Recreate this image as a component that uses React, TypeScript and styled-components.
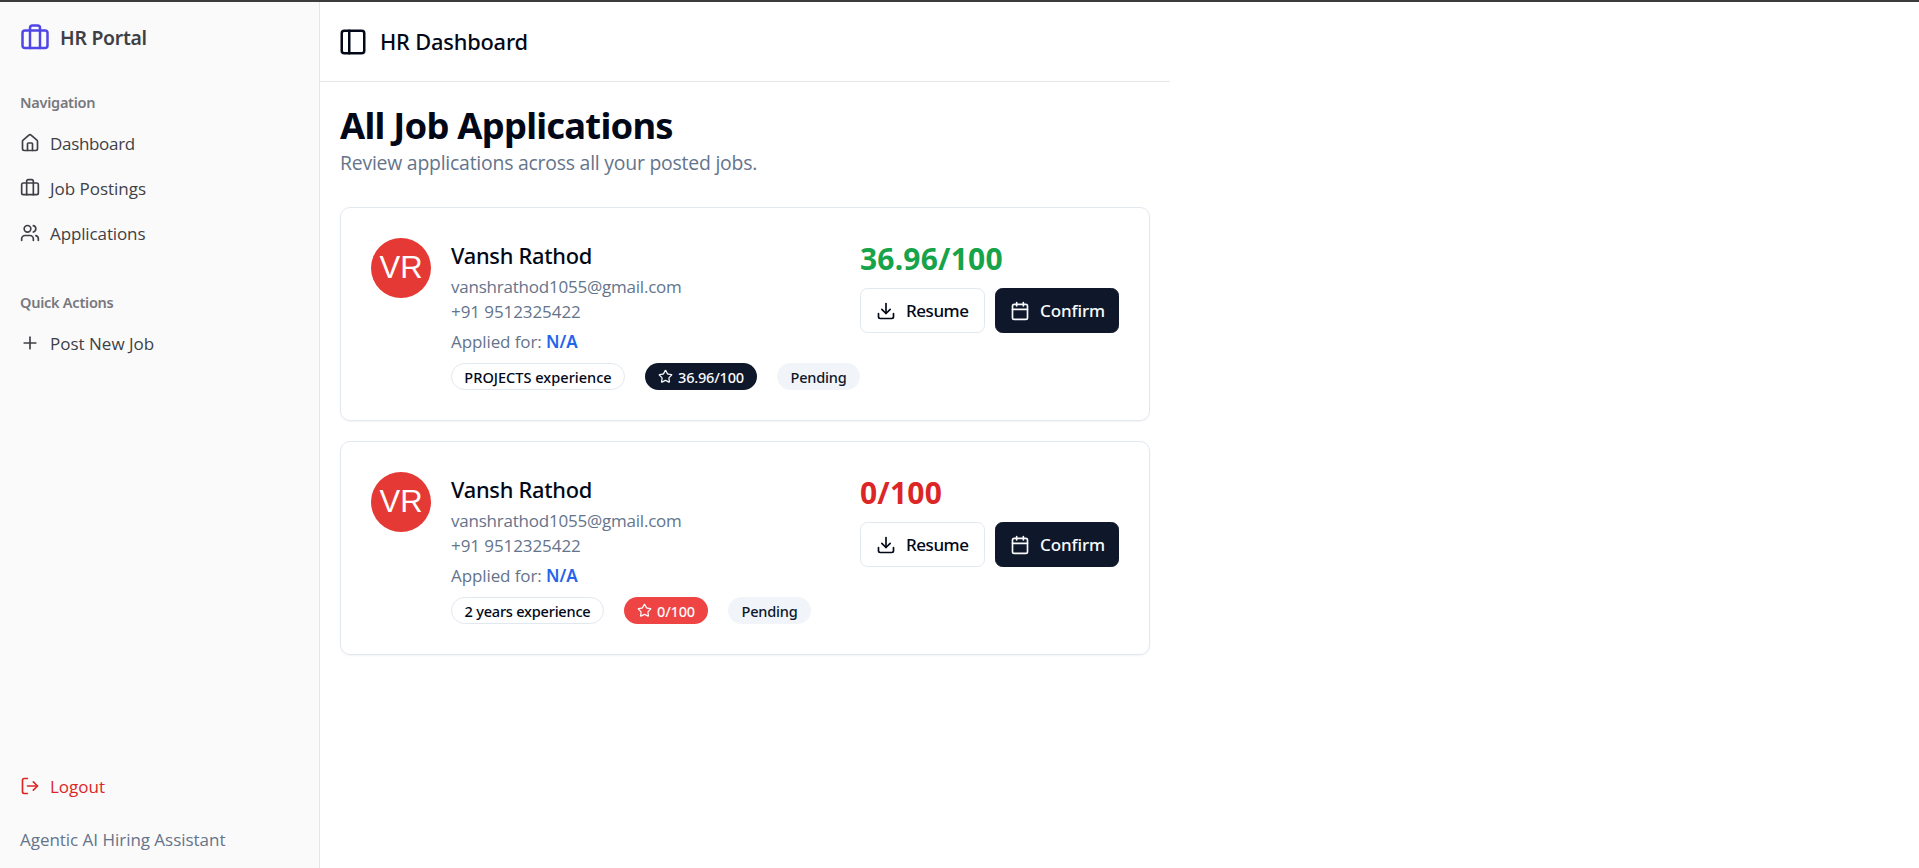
import React from "react";
import styled, { createGlobalStyle, css } from "styled-components";
import {
  Briefcase,
  Calendar,
  Download,
  House,
  LogOut,
  PanelLeft,
  Plus,
  Star,
  Users,
} from "lucide-react";

const medium = css`
  font-family: "Noto Sans", "Open Sans", sans-serif;
  font-weight: 500;
`;

const GlobalStyle = createGlobalStyle`
  *, *::before, *::after { box-sizing: border-box; }
  body {
    margin: 0;
    background: #fff;
    color: #020817;
    font-family: "Open Sans", "Noto Sans", sans-serif;
    font-size: 17px;
  }
  h1, h2, h3, p { margin: 0; }
  svg { flex-shrink: 0; }
`;

const Page = styled.div`
  display: flex;
  height: 100vh;
  border-top: 2px solid #3c3c3c;
  overflow: hidden;
`;

/* Sidebar */

const Sidebar = styled.aside`
  display: flex;
  flex-direction: column;
  width: 320px;
  flex-shrink: 0;
  background: #fafafa;
  border-right: 1px solid #e2e5f0;
  color: #3f3f46;
`;

const Brand = styled.div`
  display: flex;
  align-items: center;
  gap: 10px;
  height: 50px;
  padding: 21px 20px 0;
  ${medium}
  font-size: 19.4px;
  font-weight: 600;
  line-height: 28px;
  letter-spacing: -0.26px;

  svg {
    color: #4f46e5;
  }
`;

const NavGroup = styled.nav`
  padding: 29.5px 20px 0;
`;

const NavLabel = styled.div`
  margin-bottom: 1px;
  line-height: 40px;
  ${medium}
  font-size: 14.55px;
  font-weight: 600;
  letter-spacing: -0.27px;
  color: #78787d;
`;

const NavList = styled.div`
  display: flex;
  flex-direction: column;
  gap: 5px;
`;

const NavItem = styled.a<{ $track?: number; $danger?: boolean }>`
  display: flex;
  align-items: center;
  gap: 10px;
  height: 40px;
  letter-spacing: ${(p) => p.$track ?? 0}px;
  color: ${(p) => (p.$danger ? "#dc2626" : "inherit")};

  span {
    padding-top: 1px;
  }
`;

const SidebarFooter = styled.div`
  margin-top: auto;
  padding: 0 20px 16px;
`;

const Tagline = styled.p`
  margin-top: 21px;
  line-height: 25px;
  letter-spacing: -0.03px;
  color: #64748b;
`;

/* Main column */

const Main = styled.main`
  width: 850px;
  flex-shrink: 0;
`;

const TopBar = styled.header`
  display: flex;
  align-items: center;
  gap: 12px;
  height: 80px;
  padding: 0 18px;
  border-bottom: 1px solid #e5e7eb;
`;

const TopBarTitle = styled.h2`
  ${medium}
  font-size: 21.8px;
  letter-spacing: -0.18px;
`;

const Content = styled.section`
  padding: 21px 20px;
`;

const Title = styled.h1`
  font-family: "Noto Sans", sans-serif;
  font-size: 36.4px;
  font-weight: 700;
  line-height: 45px;
  letter-spacing: -0.78px;
`;

const Subtitle = styled.p`
  font-size: 19.4px;
  line-height: 30px;
  letter-spacing: -0.22px;
  color: #64748b;
`;

const CardList = styled.div`
  display: flex;
  flex-direction: column;
  gap: 20px;
  margin-top: 29px;
`;

const Card = styled.article`
  display: flex;
  justify-content: space-between;
  height: 214px;
  padding: 30px;
  border: 1px solid #e2e8f0;
  border-radius: 10px;
  box-shadow: 0 1px 2px rgba(0, 0, 0, 0.05);
`;

const Candidate = styled.div`
  display: flex;
  gap: 20px;
`;

const Avatar = styled.div`
  width: 60px;
  height: 60px;
  border-radius: 50%;
  background: #e53935;
  color: #fff;
  font-family: "Liberation Sans", Arial, sans-serif;
  font-size: 31px;
  line-height: 60px;
  text-align: center;
`;

const Name = styled.h3`
  ${medium}
  font-size: 21.8px;
  line-height: 35px;
  letter-spacing: -0.25px;
`;

const Detail = styled.p<{ $gap?: number; $track?: number }>`
  margin-top: ${(p) => p.$gap ?? 0}px;
  line-height: 25px;
  letter-spacing: ${(p) => p.$track ?? -0.22}px;
  color: #64748b;
`;

const JobName = styled.span`
  ${medium}
  font-weight: 600;
  letter-spacing: 0;
  color: #2563eb;
`;

const Badges = styled.div`
  display: flex;
  gap: 20px;
  margin-top: 9px;
`;

type Tone = "outline" | "primary" | "danger" | "secondary";

const tones = {
  outline: css`
    border-color: #e2e8f0;
    color: #020817;
  `,
  primary: css`
    background: #0f172a;
    color: #f8fafc;
  `,
  danger: css`
    background: #ef4444;
    color: #f8fafc;
  `,
  secondary: css`
    background: #f1f5f9;
    color: #0f172a;
  `,
};

const Badge = styled.span<{ $tone: Tone; $width: number; $track?: number }>`
  display: flex;
  align-items: center;
  justify-content: center;
  gap: 5px;
  width: ${(p) => p.$width}px;
  height: 27px;
  border: 1px solid transparent;
  border-radius: 14px;
  ${medium}
  font-size: 14.55px;
  letter-spacing: ${(p) => p.$track ?? 0}px;
  white-space: nowrap;
  ${(p) => tones[p.$tone]}
`;

const Review = styled.div`
  display: flex;
  flex-direction: column;
  gap: 10px;
`;

const Score = styled.div<{ $passing: boolean }>`
  padding-top: 1px;
  font-family: "Noto Sans", sans-serif;
  font-size: 30px;
  font-weight: 700;
  line-height: 39px;
  letter-spacing: 0.2px;
  color: ${(p) => (p.$passing ? "#16a34a" : "#dc2626")};
`;

const Actions = styled.div`
  display: flex;
  gap: 10px;
`;

const Button = styled.button<{ $primary?: boolean }>`
  display: flex;
  align-items: center;
  gap: 10px;
  width: ${(p) => (p.$primary ? 124 : 125)}px;
  height: 45px;
  padding: 0 ${(p) => (p.$primary ? 14 : 15)}px;
  border: 1px solid ${(p) => (p.$primary ? "#0f172a" : "#e2e8f0")};
  border-radius: 7.5px;
  background: ${(p) => (p.$primary ? "#0f172a" : "#fff")};
  color: ${(p) => (p.$primary ? "#f8fafc" : "#020817")};
  ${medium}
  font-size: 17px;
  letter-spacing: ${(p) => (p.$primary ? -0.1 : -0.45)}px;
`;

interface Application {
  id: number;
  experience: string;
  experienceWidth: number;
  experienceTrack: number;
  score: string;
  scoreWidth: number;
  passing: boolean;
}

const applications: Application[] = [
  {
    id: 1,
    experience: "PROJECTS experience",
    experienceWidth: 174,
    experienceTrack: 0,
    score: "36.96/100",
    scoreWidth: 112,
    passing: true,
  },
  {
    id: 2,
    experience: "2 years experience",
    experienceWidth: 153,
    experienceTrack: -0.22,
    score: "0/100",
    scoreWidth: 84,
    passing: false,
  },
];

function ApplicationCard({ app }: { app: Application }) {
  return (
    <Card>
      <Candidate>
        <Avatar>VR</Avatar>
        <div>
          <Name>Vansh Rathod</Name>
          <Detail $gap={1}>vanshrathod1055@gmail.com</Detail>
          <Detail $track={-0.08}>+91 9512325422</Detail>
          <Detail $gap={5} $track={-0.1}>
            Applied for: <JobName>N/A</JobName>
          </Detail>
          <Badges>
            <Badge
              $tone="outline"
              $width={app.experienceWidth}
              $track={app.experienceTrack}
            >
              {app.experience}
            </Badge>
            <Badge
              $tone={app.passing ? "primary" : "danger"}
              $width={app.scoreWidth}
              $track={-0.22}
            >
              <Star size={15} />
              {app.score}
            </Badge>
            <Badge $tone="secondary" $width={83} $track={-0.2}>
              Pending
            </Badge>
          </Badges>
        </div>
      </Candidate>
      <Review>
        <Score $passing={app.passing}>{app.score}</Score>
        <Actions>
          <Button>
            <Download size={20} />
            <span>Resume</span>
          </Button>
          <Button $primary>
            <Calendar size={20} />
            <span>Confirm</span>
          </Button>
        </Actions>
      </Review>
    </Card>
  );
}

export default function App() {
  return (
    <>
      <GlobalStyle />
      <Page>
        <Sidebar>
          <Brand>
            <Briefcase size={30} />
            <span>HR Portal</span>
          </Brand>
          <NavGroup>
            <NavLabel>Navigation</NavLabel>
            <NavList>
              <NavItem $track={-0.32}>
                <House size={20} />
                <span>Dashboard</span>
              </NavItem>
              <NavItem $track={-0.02}>
                <Briefcase size={20} />
                <span>Job Postings</span>
              </NavItem>
              <NavItem $track={-0.12}>
                <Users size={20} />
                <span>Applications</span>
              </NavItem>
            </NavList>
          </NavGroup>
          <NavGroup>
            <NavLabel>Quick Actions</NavLabel>
            <NavItem>
              <Plus size={20} />
              <span>Post New Job</span>
            </NavItem>
          </NavGroup>
          <SidebarFooter>
            <NavItem $danger>
              <LogOut size={20} />
              <span>Logout</span>
            </NavItem>
            <Tagline>Agentic AI Hiring Assistant</Tagline>
          </SidebarFooter>
        </Sidebar>
        <Main>
          <TopBar>
            <PanelLeft size={30} />
            <TopBarTitle>HR Dashboard</TopBarTitle>
          </TopBar>
          <Content>
            <Title>All Job Applications</Title>
            <Subtitle>Review applications across all your posted jobs.</Subtitle>
            <CardList>
              {applications.map((app) => (
                <ApplicationCard key={app.id} app={app} />
              ))}
            </CardList>
          </Content>
        </Main>
      </Page>
    </>
  );
}
